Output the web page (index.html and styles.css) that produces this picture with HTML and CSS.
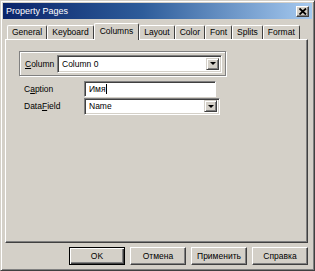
FILE: index.html
```html
<!DOCTYPE html>
<html lang="ru">
<head>
    <meta charset="UTF-8">
    <title>Property Pages</title>
    <link rel="stylesheet" href="styles.css">
</head>
<body>

<div class="window">
    <div class="titlebar">
        <span class="title">Property Pages</span>
        <span class="close">
            <svg width="8" height="7" viewBox="0 0 8 7"><path d="M0.5 0.5 L7 6.5 M7 0.5 L0.5 6.5" stroke="#000" stroke-width="1.8"/></svg>
        </span>
    </div>

    <div class="body">
        <div class="tabs">
            <div class="tab">General</div>
            <div class="tab">Keyboard</div>
            <div class="tab active">Columns</div>
            <div class="tab">Layout</div>
            <div class="tab">Color</div>
            <div class="tab">Font</div>
            <div class="tab">Splits</div>
            <div class="tab">Format</div>
        </div>

        <div class="panel">
            <div class="group">
                <span class="group-label"><u>C</u>olumn</span>
                <div class="combo group-combo">
                    <span class="value">Column 0</span>
                    <span class="drop"><i></i></span>
                </div>
            </div>

            <div class="fields">
                <span class="label">C<u>a</u>ption</span>
                <div class="textbox">Имя<span class="caret"></span></div>
                <span class="label">Data<u>F</u>ield</span>
                <div class="combo field-combo">
                    <span class="value">Name</span>
                    <span class="drop"><i></i></span>
                </div>
            </div>
        </div>

        <div class="buttons">
            <button class="default">OK</button>
            <button>Отмена</button>
            <button>Применить</button>
            <button>Справка</button>
        </div>
    </div>
</div>

</body>
</html>
```

FILE: styles.css
```css
body {
    margin: 0;
    font-family: "Liberation Sans", Arial, sans-serif;
    font-size: 8.5px;
    background: #d4d0c8;
}
.window {
    width: 315px;
    height: 271px;
    box-sizing: border-box;
    background: #d4d0c8;
    border: 1px solid #404040;
    border-top-color: #d4d0c8;
    border-left-color: #d4d0c8;
    box-shadow: inset 1px 1px #fff, inset -1px -1px #808080;
    padding: 2px;
}
.titlebar {
    height: 16px;
    display: flex;
    align-items: center;
    justify-content: space-between;
    padding: 0 3px 0 3px;
    background: linear-gradient(to right, #0a246a, #2d5c9a 45%, #a6caf0);
    color: #fff;
}
.title {
    font-size: 9px;
}
.close {
    width: 13px;
    height: 11px;
    box-sizing: border-box;
    display: flex;
    align-items: center;
    justify-content: center;
    background: #d4d0c8;
    border: 1px solid #404040;
    border-top-color: #fff;
    border-left-color: #fff;
    box-shadow: inset -1px -1px #808080;
}
.body {
    padding: 3px 4px 0 2px;
}
.tabs {
    display: flex;
    align-items: flex-end;
    height: 17px;
    padding-left: 2px;
    position: relative;
    z-index: 1;
    font-size: 8.5px;
}
.tab {
    height: 14px;
    line-height: 13px;
    padding: 0 4px;
    box-sizing: border-box;
    border-top: 1px solid #fff;
    border-left: 1px solid #fff;
    border-right: 1px solid #404040;
    border-radius: 2px 2px 0 0;
    color: #000;
}
.tab.active {
    height: 17px;
    line-height: 15px;
    margin-bottom: -1px;
    padding: 0 5px;
    background: #d4d0c8;
}
.panel {
    height: 204px;
    box-sizing: border-box;
    border: 1px solid #404040;
    border-top-color: #fff;
    border-left-color: #fff;
    box-shadow: inset -1px -1px #808080;
    padding: 11px 0 0 13px;
}
.group {
    width: 207px;
    height: 25px;
    box-sizing: border-box;
    display: flex;
    align-items: center;
    gap: 5px;
    padding: 0 3px 0 5px;
    border: 1px solid #808080;
    box-shadow: inset 1px 1px #fff, 1px 1px #fff;
}
.group-label {
    width: 27px;
}
.combo {
    height: 18px;
    box-sizing: border-box;
    display: flex;
    align-items: center;
    background: #fff;
    border: 1px solid #fff;
    border-top-color: #808080;
    border-left-color: #808080;
    box-shadow: inset 1px 1px #404040, inset -1px -1px #d4d0c8;
    padding: 2px;
}
.group-combo {
    flex: 1;
}
.value {
    flex: 1;
    padding-left: 2px;
}
.drop {
    width: 13px;
    height: 12px;
    box-sizing: border-box;
    display: flex;
    align-items: center;
    justify-content: center;
    background: #d4d0c8;
    border: 1px solid #404040;
    border-top-color: #d4d0c8;
    border-left-color: #d4d0c8;
    box-shadow: inset 1px 1px #fff, inset -1px -1px #808080;
}
.drop i {
    width: 0;
    height: 0;
    border-left: 3px solid transparent;
    border-right: 3px solid transparent;
    border-top: 3px solid #000;
}
.fields {
    display: grid;
    grid-template-columns: 60px auto;
    grid-auto-rows: 16px;
    row-gap: 1px;
    align-items: center;
    justify-content: start;
    margin-top: 5px;
    padding-left: 5px;
}
.textbox {
    width: 132px;
    height: 16px;
    box-sizing: border-box;
    display: flex;
    align-items: center;
    padding-left: 4px;
    background: #fff;
    border: 1px solid #fff;
    border-top-color: #808080;
    border-left-color: #808080;
    box-shadow: inset 1px 1px #404040;
}
.caret {
    width: 1px;
    height: 10px;
    background: #000;
}
.field-combo {
    width: 136px;
    height: 17px;
}
.buttons {
    display: flex;
    justify-content: flex-end;
    gap: 5px;
    margin-top: 4px;
}
button {
    width: 56px;
    height: 18px;
    box-sizing: border-box;
    font-family: "Liberation Sans", Arial, sans-serif;
    font-size: 8.5px;
    color: #000;
    background: #d4d0c8;
    border: 1px solid #404040;
    border-top-color: #fff;
    border-left-color: #fff;
    box-shadow: inset -1px -1px #808080;
    padding: 0;
}
button.default {
    border: 1px solid #000;
    box-shadow: inset 1px 1px #fff, inset -1px -1px #404040, inset -2px -2px #808080;
}
```
